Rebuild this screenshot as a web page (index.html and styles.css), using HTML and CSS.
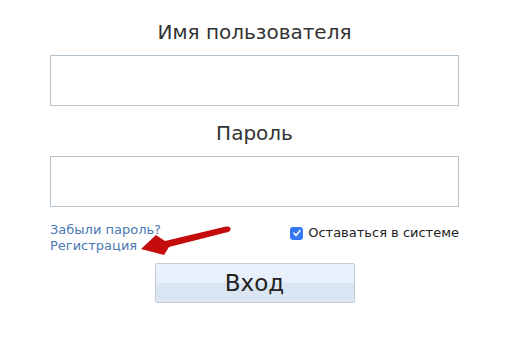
FILE: index.html
```html
<!DOCTYPE html>
<html lang="ru">
<head>
    <meta charset="UTF-8">
    <title>Вход</title>
    <link rel="stylesheet" href="styles.css">
</head>
<body>
    <form class="login">
        <label class="field-label" for="user">Имя пользователя</label>
        <input class="field" type="text" id="user">
        <label class="field-label" for="pass">Пароль</label>
        <input class="field" type="password" id="pass">
        <div class="extras">
            <div class="links">
                <a href="#">Забыли пароль?</a>
                <a href="#">Регистрация</a>
            </div>
            <label class="remember">
                <span class="check">
                    <svg width="10" height="10" viewBox="0 0 10 10"><path d="M2 5.2 L4.1 7.4 L8 2.6" fill="none" stroke="#fff" stroke-width="1.6" stroke-linecap="round" stroke-linejoin="round"/></svg>
                </span>
                Оставаться в системе
            </label>
            <svg class="arrow" width="100" height="36" viewBox="0 0 100 36">
                <path d="M3 27 L18 13 L27 19 L88 4.5 Q93 4 92.5 7.5 Q92 10 88 10.5 L31 25 L26 33 Z" fill="#c40c0c"/>
            </svg>
        </div>
        <button class="submit" type="button">Вход</button>
    </form>
</body>
</html>
```
FILE: styles.css
```css
body {
    margin: 0;
    font-family: "DejaVu Sans", sans-serif;
    background: #fff;
    color: #333;
}
.login {
    width: 409px;
    margin: 0 0 0 50px;
    padding-top: 20px;
    display: flex;
    flex-direction: column;
    align-items: center;
}
.field-label {
    font-size: 20px;
    line-height: 24px;
    color: #333;
    margin-bottom: 11px;
}
.field {
    box-sizing: border-box;
    width: 409px;
    height: 51px;
    border: 1px solid #b5c3cf;
    margin: 0 0 15px;
    padding: 0 8px;
    font-size: 16px;
}
.extras {
    position: relative;
    width: 100%;
    display: flex;
    justify-content: space-between;
    align-items: flex-start;
}
.links {
    display: flex;
    flex-direction: column;
    font-size: 13px;
    line-height: 16px;
}
.links a {
    color: #4a78b4;
    text-decoration: none;
}
.remember {
    display: flex;
    align-items: center;
    gap: 5px;
    font-size: 13px;
    line-height: 16px;
    color: #222;
    margin-top: 3px;
}
.check {
    width: 13px;
    height: 13px;
    border-radius: 3px;
    background: #3478f6;
    display: flex;
    align-items: center;
    justify-content: center;
}
.arrow {
    position: absolute;
    left: 88px;
    top: 0;
}
.submit {
    width: 200px;
    height: 40px;
    margin-top: 9px;
    border: 1px solid #c5cbd3;
    border-radius: 2px;
    background: linear-gradient(#eaf2fc 0, #e6effa 50%, #d9e5f3 50%, #dbe6f4 100%);
    font-family: "DejaVu Sans", sans-serif;
    font-size: 23px;
    color: #222;
}
```
